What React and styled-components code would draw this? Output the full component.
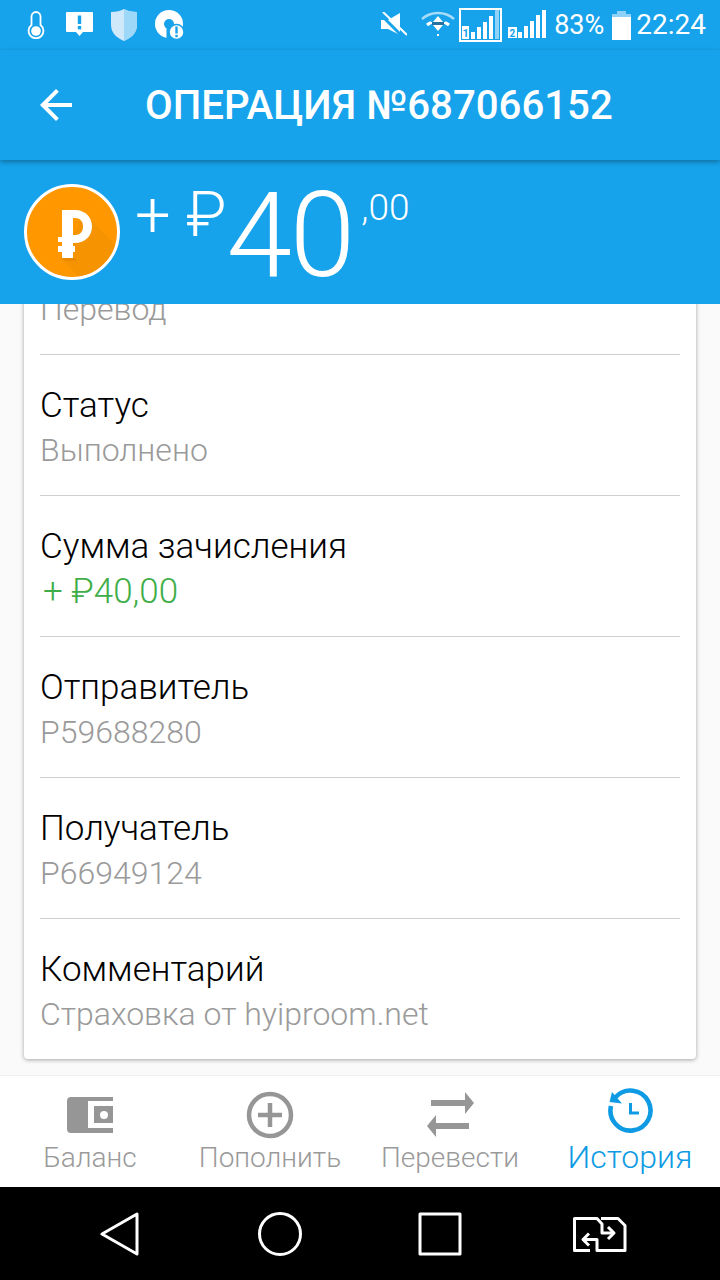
import styled, { createGlobalStyle } from "styled-components"

const BLUE = "#17a3eb"
const GREY = "#9a9a9a"

const Global = createGlobalStyle`
 html, body { margin: 0; padding: 0; background: #000; }
 * { box-sizing: border-box; }
 #root { width: 720px; height: 1280px; }
`

const Screen = styled.div`
 width: 720px;
 height: 1280px;
 display: flex;
 flex-direction: column;
 overflow: hidden;
 font-family: Roboto, "Noto Sans", sans-serif;
 background: #fafafa;
`
const StatusBar = styled.div`
 height: 50px;
 flex: none;
 background: ${BLUE};
 color: #fff;
 display: flex;
 align-items: center;
 justify-content: space-between;
 padding: 0 14px 0 24px;
`
const StatusGroup = styled.div`
 display: flex;
 align-items: center;
 gap: ${props => props.$gap || 0}px;
`
const StatusText = styled.span`
 font-size: ${props => props.$size}px;
 line-height: 50px;
 font-weight: 400;
 margin-left: ${props => props.$left || 0}px;
`
const AppBar = styled.div`
 height: 110px;
 flex: none;
 background: ${BLUE};
 color: #fff;
 display: flex;
 align-items: center;
 padding: 0 0 0 32px;
 position: relative;
 z-index: 3;
 box-shadow: 0 2px 5px rgba(0, 0, 0, 0.32);
`
const Title = styled.div`
 margin-left: 65px;
 font-size: 40.2px;
 font-weight: 500;
 white-space: nowrap;
`
const AmountBand = styled.div`
 height: 144px;
 flex: none;
 background: ${BLUE};
 color: #fff;
 display: flex;
 align-items: flex-start;
 padding: 24px 0 0 24px;
 position: relative;
 z-index: 2;
`
const Coin = styled.div`
 width: 96px;
 height: 96px;
 flex: none;
 border-radius: 50%;
 border: 3px solid #fff;
 background: #ff9800;
 display: flex;
 align-items: center;
 justify-content: center;
 overflow: hidden;
`
const Sign = styled.div`
 margin: -4px 0 0 15px;
 font-size: 63px;
 line-height: 70px;
 font-weight: 300;
 white-space: pre;
`
const Whole = styled.div`
 margin: -17px 0 0 0;
 font-size: 118px;
 line-height: 138px;
 font-weight: 300;
 letter-spacing: -2px;
`
const Cents = styled.div`
 margin: 3px 0 0 8px;
 font-size: 37px;
 line-height: 42px;
 font-weight: 300;
`
const Content = styled.div`
 flex: 1;
 min-height: 0;
 display: flex;
 flex-direction: column;
 justify-content: flex-end;
 overflow: hidden;
 padding: 0 24px 16px;
`
const Card = styled.div`
 flex: none;
 background: #fff;
 border-radius: 4px;
 padding: 0 16px;
 box-shadow: 0 1px 4px rgba(0, 0, 0, 0.35);
`
const Row = styled.div`
 height: 141px;
 padding-top: 29px;
 border-bottom: 1px solid #cfcfcf;
 &:last-child { border-bottom: 0; height: 140px; }
`
const Label = styled.div`
 font-size: 35px;
 line-height: 44px;
 font-weight: 300;
 color: #000;
`
const Value = styled.div`
 font-size: ${props => props.$green ? 35 : 32}px;
 line-height: 44px;
 margin-top: ${props => props.$green ? 1 : 0}px;
 padding-left: ${props => props.$green ? 3 : 0}px;
 font-weight: 300;
 color: ${props => props.$green ? "#3fae49" : GREY};
`
const TabBar = styled.div`
 height: 112px;
 flex: none;
 background: #fff;
 display: grid;
 grid-template-columns: repeat(4, 1fr);
 border-top: 1px solid #f0f0f0;
`
const Tab = styled.div`
 display: flex;
 flex-direction: column;
 align-items: center;
 padding-top: ${props => props.$active ? 11 : 15}px;
 color: ${props => props.$active ? "#0f9be3" : GREY};
 svg { display: block; }
`
const TabLabel = styled.div`
 margin-top: ${props => props.$active ? 0 : -1}px;
 font-size: ${props => props.$active ? 32 : 28}px;
 line-height: ${props => props.$active ? 44 : 40}px;
 font-weight: 300;
`
const NavBar = styled.div`
 height: 93px;
 flex: none;
 background: #000;
 display: flex;
 align-items: center;
 padding-left: 40px;
`
const NavSlot = styled.div`
 width: 160px;
 flex: none;
 display: flex;
 justify-content: center;
 svg { display: block; }
`

const Thermometer = () => (
 <svg width="24" height="28" viewBox="-1 0 24 28">
  <path d="M6.500 14V5.500a4.500 4.500 0 0 1 9 0V14a7.400 7.400 0 1 1-9 0z" fill="none" stroke="#fff" strokeWidth="1.800" />
  <circle cx="11" cy="20" r="4.800" fill="#fff" />
 </svg>
)
const Alert = () => (
 <svg width="27" height="26" viewBox="0 0 27 26">
  <path d="M1 0h25a1 1 0 0 1 1 1v18a1 1 0 0 1-1 1h-9l-3.500 4-3.500-4H1a1 1 0 0 1-1-1V1a1 1 0 0 1 1-1z" fill="#fff" />
  <rect x="11.800" y="3.500" width="3.400" height="8.500" fill={BLUE} />
  <rect x="11.800" y="14" width="3.400" height="3.400" fill={BLUE} />
 </svg>
)
const Shield = () => (
 <svg width="26" height="32" viewBox="0 0 26 32">
  <path d="M13 0c3 2 8 3 13 3v13c0 8-6 13-13 16C6 29 0 24 0 16V3c5 0 10-1 13-3z" fill="#cfe9fa" />
  <path d="M13 0c3 2 8 3 13 3v13c0 8-6 13-13 16z" fill="#9dd8f8" />
 </svg>
)
const Sync = () => (
 <svg width="29" height="30" viewBox="0 0 29 30">
  <circle cx="14" cy="14" r="14" fill="#fff" />
  <circle cx="14" cy="14" r="5" fill={BLUE} />
  <rect x="11.500" y="14" width="5" height="14" fill={BLUE} />
  <circle cx="21.500" cy="22" r="7.500" fill="#fff" stroke={BLUE} strokeWidth="1.500" />
  <rect x="20.300" y="16.500" width="2.400" height="7" fill={BLUE} />
  <rect x="20.300" y="24.800" width="2.400" height="2.400" fill={BLUE} />
 </svg>
)
const Mute = () => (
 <svg width="26" height="26" viewBox="0 0 26 26" style={{ marginRight: 14 }}>
  <path d="M0 8h7L19 1v22L7 17H0z" fill="#fff" />
  <path d="M0 3l22 22" stroke={BLUE} strokeWidth="3" />
  <path d="M2 0l24 23" stroke="#fff" strokeWidth="2" />
 </svg>
)
const Wifi = () => (
 <svg width="34" height="28" viewBox="0 0 34 28" style={{ marginRight: 4 }}>
  <path d="M1 8C10 0 24 0 33 8" fill="none" stroke="#a9dcf8" strokeWidth="2.500" />
  <path d="M6 14c6-5 16-5 22 0" fill="none" stroke="#fff" strokeWidth="3" />
  <path d="M17 3l8 8H9z" fill={BLUE} />
  <path d="M17 5l5 6H12z" fill="#fff" />
  <rect x="11" y="11" width="12" height="3" fill="#26719f" />
  <path d="M12 14h10l-5 6z" fill="#fff" />
  <rect x="16" y="23" width="2" height="2" fill="#fff" />
 </svg>
)
const SimOne = () => (
 <svg width="43" height="34" viewBox="0 0 43 34" style={{ marginRight: 6 }}>
  <rect x="1" y="1" width="41" height="32" fill="none" stroke="#fff" strokeWidth="2" />
  <rect x="3" y="18" width="7" height="13" fill="#fff" />
  <text x="3.500" y="29" fontSize="11" fontWeight="700" fontFamily="Roboto" fill={BLUE}>1</text>
  <rect x="12" y="24" width="4" height="7" fill="#fff" />
  <rect x="18" y="19" width="4" height="12" fill="#fff" />
  <rect x="24" y="14" width="4" height="17" fill="#fff" />
  <rect x="30" y="8" width="4" height="23" fill="#fff" />
  <rect x="36" y="2" width="4" height="29" fill="#8fd2f7" />
 </svg>
)
const SimTwo = () => (
 <svg width="38" height="30" viewBox="0 0 38 30" style={{ marginRight: 8 }}>
  <rect x="0" y="17" width="9" height="11" fill="#fff" />
  <text x="1.500" y="27" fontSize="10" fontWeight="700" fontFamily="Roboto" fill={BLUE}>2</text>
  <rect x="10" y="22" width="4" height="6" fill="#fff" />
  <rect x="16" y="16" width="4" height="12" fill="#fff" />
  <rect x="22" y="11" width="4" height="17" fill="#fff" />
  <rect x="28" y="5" width="4" height="23" fill="#fff" />
  <rect x="34" y="0" width="4" height="28" fill="#fff" />
 </svg>
)
const Battery = () => (
 <svg width="19" height="29" viewBox="0 0 19 29" style={{ marginLeft: 8 }}>
  <rect x="5" y="0" width="9" height="3" fill="#8fd2f7" />
  <rect x="0" y="3" width="19" height="3" fill="#8fd2f7" />
  <rect x="0" y="6" width="19" height="23" fill="#fff" />
 </svg>
)
const BackArrow = () => (
 <svg width="48" height="48" viewBox="0 0 24 24" fill="#fff">
  <path d="M20 11H7.830l5.590-5.590L12 4l-8 8 8 8 1.410-1.410L7.830 13H20v-2z" />
 </svg>
)
const RubleCoin = () => (
 <svg width="90" height="90" viewBox="0 0 90 90">
  <path d="M58 27L90 60V90H52L33 71z" fill="#f59300" />
  <path d="M35 71h13l2 3H38z" fill="#ea8a00" />
  <path fillRule="evenodd" fill="#fff" d="M35 23H48C59 23 65 31 65 39.500C65 49 58 56 48 56H46V59H48V65H46V71H35V65H31V59H35V55H31V50H35ZM46 31V48H48C53 48 56 45 56 39.500C56 34 53 31 48 31Z" />
 </svg>
)
const Wallet = () => (
 <svg width="46" height="48" viewBox="0 0 46 48" fill="#969696">
  <path d="M4 6h42v4H21v27h25v5H4a4 4 0 0 1-4-4V10a4 4 0 0 1 4-4z" />
  <path d="M27 15h19v17H27z" />
  <circle cx="37" cy="24" r="4" fill="#fff" />
 </svg>
)
const PlusCircle = () => (
 <svg width="48" height="48" viewBox="0 0 48 48" fill="none" stroke="#969696" strokeWidth="4.500">
  <circle cx="24" cy="24" r="21" />
  <path d="M24 12v24M12 24h24" />
 </svg>
)
const Arrows = () => (
 <svg width="48" height="48" viewBox="0 0 48 48" fill="#969696">
  <path d="M5 9h34V1l9 11-9 11v-8H5z" />
  <path d="M43 32H10v-8L1 35l9 11v-8h33z" />
 </svg>
)
const History = () => (
 <svg width="48" height="48" viewBox="0 0 48 48" fill="none">
  <path d="M9.500 10.300A20 20 0 1 1 5 19" stroke="#0f9be3" strokeWidth="4.600" />
  <path d="M3.500 15L16 16.500 6 5z" fill="#0f9be3" />
  <path d="M24.500 16v10h8.500" stroke="#0f9be3" strokeWidth="3" />
 </svg>
)
const NavBack = () => (
 <svg width="40" height="46" viewBox="0 0 40 46" fill="none" stroke="#fff" strokeWidth="3" strokeLinejoin="round">
  <path d="M37 3v40L2 23z" />
 </svg>
)
const NavHome = () => (
 <svg width="46" height="46" viewBox="0 0 46 46" fill="none" stroke="#fff" strokeWidth="3">
  <circle cx="23" cy="23" r="20.500" />
 </svg>
)
const NavRecent = () => (
 <svg width="44" height="44" viewBox="0 0 44 44" fill="none" stroke="#fff" strokeWidth="3" strokeLinejoin="round">
  <rect x="2" y="2" width="40" height="40" />
 </svg>
)
const NavSwitch = () => (
 <svg width="54" height="36" viewBox="0 0 54 36" fill="none" stroke="#fff" strokeWidth="3" strokeLinejoin="round">
  <path d="M17 34.500H1.500V2.500H24L29 8V17H40" />
  <path d="M28 2.500H45L52 9.500V34.500H24V23.500H12" />
  <path d="M35 11l6 6-6 6" />
  <path d="M16 17.500l-6 6 6 6" />
 </svg>
)

const rows = [
 { label: "Тип операции", value: "Перевод" },
 { label: "Статус", value: "Выполнено" },
 { label: "Сумма зачисления", value: "+ ₽40,00", green: true },
 { label: "Отправитель", value: "P59688280" },
 { label: "Получатель", value: "P66949124" },
 { label: "Комментарий", value: "Страховка от hyiproom.net" },
]

const App = () => {
 return (
  <Screen>
   <Global />
   <StatusBar>
    <StatusGroup $gap={18}>
     <Thermometer />
     <Alert />
     <Shield />
     <Sync />
    </StatusGroup>
    <StatusGroup>
     <Mute />
     <Wifi />
     <SimOne />
     <SimTwo />
     <StatusText $size={27}>83%</StatusText>
     <Battery />
     <StatusText $size={28} $left={5}>22:24</StatusText>
    </StatusGroup>
   </StatusBar>
   <AppBar>
    <BackArrow />
    <Title>ОПЕРАЦИЯ №687066152</Title>
   </AppBar>
   <AmountBand>
    <Coin><RubleCoin /></Coin>
    <Sign>+ ₽</Sign>
    <Whole>40</Whole>
    <Cents>,00</Cents>
   </AmountBand>
   <Content>
    <Card>
     {rows.map(row => (
      <Row key={row.label}>
       <Label>{row.label}</Label>
       <Value $green={row.green}>{row.value}</Value>
      </Row>
     ))}
    </Card>
   </Content>
   <TabBar>
    <Tab><Wallet /><TabLabel>Баланс</TabLabel></Tab>
    <Tab><PlusCircle /><TabLabel>Пополнить</TabLabel></Tab>
    <Tab><Arrows /><TabLabel>Перевести</TabLabel></Tab>
    <Tab $active><History /><TabLabel $active>История</TabLabel></Tab>
   </TabBar>
   <NavBar>
    <NavSlot><NavBack /></NavSlot>
    <NavSlot><NavHome /></NavSlot>
    <NavSlot><NavRecent /></NavSlot>
    <NavSlot><NavSwitch /></NavSlot>
   </NavBar>
  </Screen>
 )
}

export default App
